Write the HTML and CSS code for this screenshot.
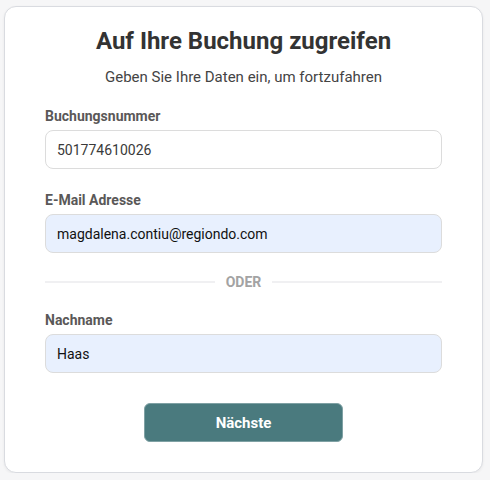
FILE: index.html
```html
<!DOCTYPE html>
<html lang="de">
<head>
    <meta charset="UTF-8">
    <meta name="viewport" content="width=device-width, initial-scale=1.0">
    <title>Buchung aufrufen</title>
    <link rel="stylesheet" href="styles.css">
</head>
<body>

    <!-- Booking lookup card -->
    <div class="card">
        <h1>Auf Ihre Buchung zugreifen</h1>
        <p class="intro">Geben Sie Ihre Daten ein, um fortzufahren</p>

        <form id="lookupForm">
            <div class="field">
                <label for="booking">Buchungsnummer</label>
                <input type="text" id="booking" name="booking" value="501774610026">
            </div>

            <div class="field">
                <label for="email">E-Mail Adresse</label>
                <input type="email" id="email" name="email" class="filled" value="magdalena.contiu@regiondo.com">
            </div>

            <div class="divider"><span>ODER</span></div>

            <div class="field field-after-divider">
                <label for="lastname">Nachname</label>
                <input type="text" id="lastname" name="lastname" class="filled" value="Haas">
            </div>

            <div class="actions">
                <button type="button">Nächste</button>
            </div>
        </form>
    </div>

</body>
</html>
```

FILE: styles.css
```css
body {
    font-family: Roboto, "Liberation Sans", Arial, sans-serif;
    background-color: #f6f6f7;
    margin: 0;
    padding: 6px 6px 0 4px;
}
.card {
    box-sizing: border-box;
    width: 479px;
    height: 467px;
    background-color: white;
    border: 1px solid #d9dbe0;
    border-radius: 12px;
    box-shadow: 0 1px 3px rgba(0, 0, 0, 0.06);
    padding: 19px 40px 30px;
}
h1 {
    margin: 0;
    font-size: 24px;
    line-height: 30px;
    font-weight: 700;
    color: #333;
    text-align: center;
}
.intro {
    margin: 11px 0 0;
    font-size: 15px;
    line-height: 20px;
    color: #444;
    text-align: center;
}
.field {
    margin-top: 20px;
}
.field + .field {
    margin-top: 22px;
}
.field-after-divider {
    margin-top: 21px;
}
label {
    display: block;
    font-size: 14px;
    font-weight: 700;
    line-height: 18px;
    color: #5a5858;
    margin-bottom: 5px;
}
input {
    box-sizing: border-box;
    display: block;
    width: 100%;
    height: 39px;
    padding: 0 11px;
    font-family: inherit;
    font-size: 14px;
    color: #3a3a3a;
    background-color: white;
    border: 1px solid #dcdcdc;
    border-radius: 8px;
    outline: none;
}
input.filled {
    background-color: #e8f0fe;
    color: #111;
}
.divider {
    display: flex;
    align-items: center;
    gap: 11px;
    margin-top: 21px;
    height: 16px;
    font-size: 14px;
    font-weight: 700;
    color: #a3a3a3;
}
.divider::before,
.divider::after {
    content: "";
    flex: 1;
    height: 2px;
    background-color: #f0f0f2;
}
.actions {
    display: flex;
    justify-content: center;
    margin-top: 30px;
}
button {
    width: 199px;
    height: 39px;
    font-family: inherit;
    font-size: 15px;
    font-weight: 700;
    color: white;
    background-color: #4a7a7e;
    border: 1px solid #7fa1a4;
    border-radius: 6px;
    cursor: pointer;
}
```
